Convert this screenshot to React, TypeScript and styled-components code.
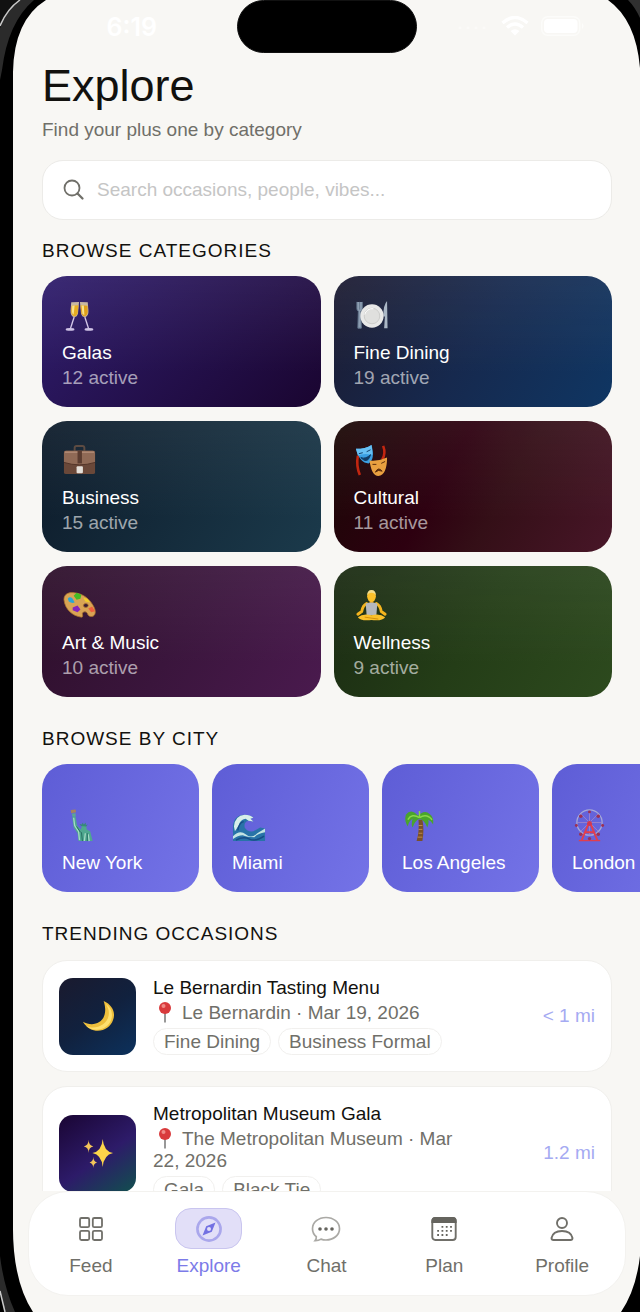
import React from 'react';
import styled, { createGlobalStyle } from 'styled-components';

const GlobalStyle = createGlobalStyle`
  * { box-sizing: border-box; }
  body {
    margin: 0;
    background: #000;
    font-family: "Liberation Sans", Arial, sans-serif;
    font-size: 19px;
    line-height: 22px;
    color: #12110e;
  }
  h1, h2, h3, p { margin: 0; font-weight: 400; }
  button { font: inherit; color: inherit; border: 0; padding: 0; text-align: left; cursor: pointer; }
  a { color: inherit; text-decoration: none; }
`;

const Device = styled.div`
  position: relative;
  height: 100vh;
  padding-left: 13px;
  background: #000;
  overflow: hidden;
`;

const Screen = styled.div`
  height: 100%;
  display: flex;
  flex-direction: column;
  background: #f8f7f4;
`;

const Corner = styled.svg<{ $v: 'top' | 'bottom'; $h: 'left' | 'right' }>`
  position: absolute;
  ${(p) => p.$v}: 0;
  ${(p) => p.$h}: 0;
  pointer-events: none;
`;

const StatusBar = styled.header`
  flex: none;
  height: 60px;
  display: grid;
  grid-template-columns: 1fr 180px 1fr;
  color: #fff;
`;

const Clock = styled.time`
  justify-self: center;
  margin: 12px 0 0 14px;
  font: 600 25px/30px Inter, sans-serif;
`;

const Island = styled.div`
  height: 53px;
  border-radius: 27px;
  background: #000;
  border: 1px solid #111;
`;

const Signals = styled.div`
  display: flex;
  align-items: center;
  height: 52px;
  padding-left: 40px;
  gap: 12px;
`;

const Scroll = styled.main`
  flex: 1;
  min-height: 0;
  overflow: hidden;
  display: flex;
  flex-direction: column;
`;

const Intro = styled.div`
  flex: none;
  padding: 0 28px 0 29px;
`;

const Title = styled.h1`
  font-size: 45px;
  line-height: 52px;
`;

const Subtitle = styled.p`
  margin-top: 7px;
  color: #706f69;
`;

const SearchBox = styled.label`
  display: flex;
  align-items: center;
  gap: 12px;
  height: 60px;
  margin-top: 19px;
  padding: 0 20px;
  background: #fff;
  border: 1px solid #ecebe8;
  border-radius: 21px;
`;

const SearchInput = styled.input`
  flex: 1;
  min-width: 0;
  border: 0;
  padding: 0;
  outline: 0;
  background: none;
  font: inherit;
  color: #12110e;
  &::placeholder { color: #c5c5c5; opacity: 1; }
`;

const Section = styled.section<{ $first?: boolean }>`
  flex: none;
  margin-top: ${(p) => (p.$first ? 20 : 31)}px;
`;

const Heading = styled.h2`
  padding: 0 28px 0 29px;
  margin-bottom: 14px;
  font-size: 19px;
  line-height: 22px;
  letter-spacing: 1px;
`;

const CategoryGrid = styled.div`
  display: grid;
  grid-template-columns: 1fr 1fr;
  gap: 14px 13px;
  padding: 0 28px 0 29px;
`;

const Tile = styled.button<{ $fill: string }>`
  display: flex;
  flex-direction: column;
  justify-content: flex-end;
  border-radius: 25px;
  padding: 18px 20px;
  color: #fff;
  background: ${(p) => p.$fill};
`;

const CategoryTile = styled(Tile)`
  height: 131px;
`;

const CityTile = styled(Tile)`
  flex: none;
  width: 157px;
  height: 128px;
`;

const Glyph = styled.svg`
  display: block;
  width: 35px;
  height: 36px;
  margin-bottom: 9px;
`;

const Count = styled.span`
  margin-top: 3px;
  color: rgba(255, 255, 255, 0.6);
`;

const CityRow = styled.div`
  display: flex;
  gap: 13px;
  padding: 0 28px 0 29px;
  overflow: hidden;
`;

const Occasions = styled.div`
  display: flex;
  flex-direction: column;
  gap: 14px;
  padding: 1px 28px 0 29px;
`;

const OccasionCard = styled.article`
  display: flex;
  align-items: center;
  gap: 17px;
  padding: 16px;
  background: #fff;
  border: 1px solid #f0efec;
  border-radius: 25px;
`;

const Thumb = styled.div<{ $fill: string }>`
  flex: none;
  width: 77px;
  height: 77px;
  border-radius: 14px;
  display: grid;
  place-items: center;
  background: ${(p) => p.$fill};
`;

const Details = styled.div`
  flex: 1;
  min-width: 0;
  display: flex;
  flex-direction: column;
  gap: 4px;
`;

const Name = styled.h3`
  font-size: 19px;
  line-height: 21px;
`;

const Meta = styled.p`
  max-width: 320px;
  color: #706f69;
`;

const Pin = styled.svg`
  width: 24px;
  height: 22px;
  margin-right: 5px;
  vertical-align: top;
`;

const Tags = styled.div`
  display: flex;
  gap: 7px;
`;

const Tag = styled.span`
  height: 27px;
  padding: 0 10px;
  border: 1px solid #f1f0ee;
  border-radius: 14px;
  line-height: 25px;
  white-space: nowrap;
  color: #706f69;
`;

const Distance = styled.span`
  white-space: nowrap;
  color: #a5aaf2;
`;

const TabBar = styled.nav`
  flex: none;
  display: flex;
  height: 105px;
  margin: 0 14px 16px 15px;
  padding: 16px 4px 0 3px;
  background: #fff;
  border: 1px solid #f3f2ef;
  border-radius: 40px;
`;

const Tab = styled.a<{ $active?: boolean }>`
  flex: 1;
  display: flex;
  flex-direction: column;
  align-items: center;
  gap: 6px;
  color: ${(p) => (p.$active ? '#7c7be8' : '#706f69')};
`;

const TabIcon = styled.span<{ $active?: boolean }>`
  width: 67px;
  height: 41px;
  display: grid;
  place-items: center;
  border-radius: 16px;
  border: 1px solid ${(p) => (p.$active ? '#c9c5ef' : 'transparent')};
  background: ${(p) => (p.$active ? '#e2dff8' : 'none')};
`;

const sheen = 'linear-gradient(180deg, rgba(255,255,255,.06), rgba(255,255,255,0) 75%)';

const glyphs: Record<string, React.ReactNode> = {
  galas: (
    <>
      <g>
        <path d="M9.500 5.500 17.500 5 16.500 17Q15 21.500 12 20.500 8.500 19 8.800 14Z" fill="#c9b8a0" />
        <path d="M9.800 9 17 8.500 16 17Q14.500 20.500 12 19.500 9.300 18 9.500 14Z" fill="#e7ad22" />
        <path d="M10.500 9 13 8.800 12 18Q10 17 10.300 13Z" fill="#fbe38a" />
        <path d="M12.500 20.500 8.500 33" stroke="#d6c9ea" strokeWidth="1.400" />
        <ellipse cx="8.300" cy="33.300" rx="4.500" ry="1.500" fill="#cfc3e6" />
      </g>
      <g transform="matrix(-1 0 0 1 36 0)">
        <path d="M9.500 5.500 17.500 5 16.500 17Q15 21.500 12 20.500 8.500 19 8.800 14Z" fill="#c9b8a0" />
        <path d="M9.800 9 17 8.500 16 17Q14.500 20.500 12 19.500 9.300 18 9.500 14Z" fill="#dfa01a" />
        <path d="M13.500 8.800 16 8.600 15 17 13 19Z" fill="#fbe38a" />
        <path d="M12.500 20.500 8.500 33" stroke="#d6c9ea" strokeWidth="1.400" />
        <ellipse cx="8.300" cy="33.300" rx="4.500" ry="1.500" fill="#cfc3e6" />
      </g>
    </>
  ),
  dining: (
    <>
      <path d="M3 5v7q0 2 1.500 2.500L4 32h3.500L7 14.500Q8.500 14 8.500 12V5M5.800 5v8" fill="#8e9fb3" stroke="#65788d" strokeWidth="1" />
      <path d="M34 4q-4 4-3.800 16h1.600L31 32h3.500Z" fill="#aab7c5" />
      <circle cx="18.500" cy="19.500" r="12" fill="#e8e8e7" />
      <circle cx="18.500" cy="19.500" r="8" fill="#e0e0de" stroke="#c6c6c4" strokeWidth=".8" />
      <path d="M11 18a8 8 0 0 1 9-6" fill="none" stroke="#fff" strokeWidth="1" />
    </>
  ),
  business: (
    <>
      <path d="M13 9V6q0-2 2-2h6q2 0 2 2v3" fill="none" stroke="#5d4b42" strokeWidth="2" />
      <rect x="2" y="9" width="32" height="24" rx="2" fill="#6a4839" />
      <path d="M2 11q0-2 2-2h28q2 0 2 2v10q-16 5-32 0Z" fill="#906a56" />
      <path d="M3 10.500h30" stroke="#b08a74" strokeWidth="1.500" />
      <path d="M2 21q16 5 32 0" fill="none" stroke="#543528" />
      <rect x="16" y="9" width="4.500" height="13" fill="#5b3c30" />
      <rect x="15" y="25" width="6.500" height="7" rx="1" fill="#e5e0da" />
    </>
  ),
  cultural: (
    <>
      <path d="M4 14Q2 24 6 34M30 4q3 8-1 14" fill="none" stroke="#c32610" strokeWidth="2.600" />
      <path d="M2 7Q12 7 18 3 22 18 15 22 6 22 2 7Z" fill="#3a9fe3" />
      <path d="M2 7Q12 7 18 3 19 9 19 13 9 11 4 14Z" fill="#67c0f4" />
      <path d="m5 12 4-1m4-1 4-2M7 16q5 2 10-3-2 7-6 6-2-1-4-3Z" stroke="#123c66" fill="#123c66" />
      <path d="M16 19q9 1 18-3 0 18-9 19-7 0-9-16Z" fill="#e8a040" />
      <path d="m19 23 4 0m5-1 4-2M22 31q3-6 7-1-4-2-7 1Z" stroke="#5b2c0b" fill="#5b2c0b" />
    </>
  ),
  art: (
    <>
      <path fillRule="evenodd" d="M2 13C2 7 7 5 13 6c9 1 15 6 19 13 3 5 3 9 0 11-3 1-5 0-6-3-1-2-4-2-5 0 0 2 1 4-1 4C11 30 3 23 2 13Zm20 6a2.500 2 0 1 0 5 0 2.500 2 0 0 0-5 0Z" fill="#d9a455" stroke="#a9712b" strokeWidth=".8" />
      <path d="M6 12q2-3 5 0l2 4q-3 1-6-1Z" fill="#2ba5d4" />
      <path d="m12 9 3-3 5 2-1 4-4 1Z" fill="#44bb25" />
      <path d="m22 11 4 1 3 4-5-1Z" fill="#f1ce2a" />
      <path d="m11 21 5-2 3 4-3 3-5-2Z" fill="#8623bb" />
      <path d="m27 22 4-2 3 5-4 1Z" fill="#ef603d" />
    </>
  ),
  wellness: (
    <>
      <path d="M13 17Q9 19 8 25L4 28M23 17q4 2 5 8l4 3" fill="none" stroke="#f5b51e" strokeWidth="3" strokeLinecap="round" />
      <path d="M16 14h4v4h-4Z" fill="#e19c12" />
      <path d="M12 17q6-2 12 0l-1 12H13Z" fill="#b5b8bd" />
      <path d="M4 31q5-4 14-2 9-2 14 2-2 4-14 3-12 1-14-3Z" fill="#fbc02a" />
      <path d="m11 31 14 2" stroke="#d18e0c" />
      <ellipse cx="18" cy="9.500" rx="4.500" ry="6" fill="#fbc02a" />
      <path d="M13.500 9q0-6 4.500-6t4.500 6q-1-3-4.500-3t-4.500 3Z" fill="#f2dc8c" />
    </>
  ),
  newyork: (
    <>
      <path d="m9 3 5-.500.500 3-5 1Z" fill="#a7835e" />
      <path d="m10 7 4-.500V10h-3Z" fill="#5aa893" />
      <path d="M10.500 10H14l1.500 9 4 4.500q0-4 3-4.500 3 0 3 4l3.500 2 2.500 10H17l-1-8-4-6Z" fill="#4fa88f" />
      <path d="m12 11 1 8 4 6 1 9M24 27l-1 8M27 28l1 7" fill="none" stroke="#a5dac5" strokeWidth="1.300" />
      <path d="m20 26 1 9M26 27v8M15 20l4 6" fill="none" stroke="#256b60" />
      <path d="m19.500 19.500-1.500-2 2.500.500.500-2 1.500 2 2-2v2.500l2-.500-1.500 2Z" fill="#368b78" />
    </>
  ),
  miami: (
    <>
      <path d="M1 35V20Q2 8 13 8q6 0 9 3l-3 1 3 3-5-1q-5 1-4 7 3 5 9 4l7-4 5 1v13Z" fill="#2873a8" />
      <path d="M2 20Q3 9 13 8q6 0 9 3l-3 1 3 3-5-1-3-2q-6 1-7 7l-4 6Z" fill="#d7eee9" />
      <path d="M1 30q7-7 13-2t12-1l8-5v4q-7 1-11 5-8 0-12-2-5 0-10 4Z" fill="#c3e4e3" />
      <path d="M6 24q1-8 6-9M4 34q8-4 14-1t15-3" fill="none" stroke="#174c86" strokeWidth="1.500" />
    </>
  ),
  la: (
    <>
      <path d="m17 13 4 0q2 10 0 22h-6q3-10 2-22Z" fill="#7a5029" />
      <path d="m17 19 4 0m-4 4h4m-4 4h4m-5 4h5" stroke="#c18b49" />
      <path d="M18 11Q10 0 4 8 2 14 6 20q1-6 5-8-2 6 0 9 2-7 7-9 5 1 8 9 2-5 1-8 3 1 5 5 1-8-4-11-5-5-14 4Z" fill="#49a52c" />
      <path d="M18 11q-8-5-12 2m12-2q7-5 13 2M18 11l0-7" fill="none" stroke="#8bd64b" strokeWidth="1.500" />
    </>
  ),
  london: (
    <>
      <circle cx="18" cy="16" r="13" fill="none" stroke="#a7a9d7" strokeWidth="1.300" />
      <path d="M18 3v26M5 16h26M9 7l18 18M27 7 9 25" stroke="#a889c9" strokeWidth=".8" />
      <path d="M17 17 10 34m9-17 7 17M13 26h10" stroke="#e23e4c" strokeWidth="2" />
      <path d="M7 34.500h22" stroke="#e23e4c" strokeWidth="1.400" />
      <circle cx="18" cy="17" r="2.500" fill="#d0384e" />
      <g fill="#9c3155">
        <circle cx="18" cy="5" r="1.500" /><circle cx="18" cy="32.500" r="1.700" /><circle cx="4.500" cy="19" r="1.500" /><circle cx="31.500" cy="19" r="1.500" />
        <circle cx="9" cy="9.500" r="1.800" /><circle cx="27" cy="9.500" r="1.800" /><circle cx="9" cy="28" r="1.800" /><circle cx="27" cy="28" r="1.800" />
      </g>
    </>
  ),
};

const categories = [
  { name: 'Galas', count: 12, art: 'galas', fill: 'linear-gradient(135deg, #2f1d6d, #1a0530)' },
  { name: 'Fine Dining', count: 19, art: 'dining', fill: 'linear-gradient(120deg, #1c1b31, #16294e 50%, #0f3663)' },
  { name: 'Business', count: 15, art: 'business', fill: 'linear-gradient(120deg, #0d1b2a, #1b3a4b)' },
  { name: 'Cultural', count: 11, art: 'cultural', fill: 'linear-gradient(120deg, #1a0805, #2d0010 40%, #340f17 60%, #481628)' },
  { name: 'Art & Music', count: 10, art: 'art', fill: 'linear-gradient(120deg, #2d0f2a, #3a153c 50%, #4a1a4e)' },
  { name: 'Wellness', count: 9, art: 'wellness', fill: 'linear-gradient(120deg, #1a2a12, #243d17 50%, #2d4a1e)' },
];

const cities = [
  { name: 'New York', art: 'newyork' },
  { name: 'Miami', art: 'miami' },
  { name: 'Los Angeles', art: 'la' },
  { name: 'London', art: 'london' },
];

const moon = (
  <svg width="34" height="34" viewBox="0 0 36 36" aria-hidden="true">
    <path d="M24 2C33 6 37 14 34 22 30 35 11 39 2 24 14 31 31 24 24 2Z" fill="#eebf3c" />
    <path d="M26 5c6 8 4 17-3 22-6 4-13 4-18 1 9 8 23 5 27-6 2-7 0-13-6-17Z" fill="#ffe06e" />
  </svg>
);

const sparkles = (
  <svg width="32" height="34" viewBox="0 0 34 36" aria-hidden="true">
    <path d="M22 3q1 13 11 15-10 2-11 15-1-13-11-15 10-2 11-15Z" fill="#fdd54a" />
    <path d="M7 4q0 6 5 7-5 1-5 7 0-6-5-7 5-1 5-7ZM12 22q0 5 4 6-4 1-4 6 0-5-4-6 4-1 4-6Z" fill="#f4c55a" />
  </svg>
);

const occasions = [
  {
    name: 'Le Bernardin Tasting Menu',
    meta: 'Le Bernardin · Mar 19, 2026',
    tags: ['Fine Dining', 'Business Formal'],
    distance: '< 1 mi',
    fill: 'linear-gradient(145deg, #1a1a2e, #11213e 50%, #0c315c)',
    art: moon,
  },
  {
    name: 'Metropolitan Museum Gala',
    meta: 'The Metropolitan Museum · Mar 22, 2026',
    tags: ['Gala', 'Black Tie'],
    distance: '1.2 mi',
    fill: 'linear-gradient(145deg, #1a0533, #2d1b69 55%, #11504e)',
    art: sparkles,
  },
];

const tabs = [
  {
    name: 'Feed',
    icon: (
      <g fill="none" stroke="#706f69" strokeWidth="1.800">
        <rect x="2" y="2" width="9.200" height="9.200" rx="1.500" />
        <rect x="14.800" y="2" width="9.200" height="9.200" rx="1.500" />
        <rect x="2" y="14.800" width="9.200" height="9.200" rx="1.500" />
        <rect x="14.800" y="14.800" width="9.200" height="9.200" rx="1.500" />
      </g>
    ),
  },
  {
    name: 'Explore',
    active: true,
    icon: (
      <>
        <circle cx="13" cy="13" r="11.600" fill="none" stroke="#aaa7ec" strokeWidth="2.600" />
        <path fillRule="evenodd" d="M19.500 6.500 15.800 15.800 6.500 19.500 10.200 10.200ZM13 11a2 2 0 1 0 0 4 2 2 0 0 0 0-4Z" fill="#7371e2" />
      </>
    ),
  },
  {
    name: 'Chat',
    icon: (
      <>
        <path d="M13 1.500c7.500 0 13.500 4.800 13.500 11.200S20.500 24 13 24c-2 0-3.500-.3-5-.9-1.500 1-3.500 1.700-6 1.600 1-1.200 1.500-2.500 1.300-4C.8 18.600-.5 15.800-.5 12.700-.5 6.300 5.500 1.500 13 1.500Z" fill="none" stroke="#aaa9a5" strokeWidth="1.700" />
        <g fill="#65645e"><circle cx="7" cy="13" r="1.800" /><circle cx="13" cy="13" r="1.800" /><circle cx="19" cy="13" r="1.800" /></g>
      </>
    ),
  },
  {
    name: 'Plan',
    icon: (
      <>
        <rect x="1.300" y="2" width="23.400" height="22" rx="3" fill="none" stroke="#706f69" strokeWidth="1.900" />
        <path d="M.4 7V5q0-4 4-4h17.200q4 0 4 4v2Z" fill="#65645e" />
        <path d="M10.500 10.800h11.500M6.200 14.900H22M6.200 19H18" stroke="#65645e" strokeWidth="1.800" strokeDasharray="1.800 2.500" />
      </>
    ),
  },
  {
    name: 'Profile',
    icon: (
      <g fill="none" stroke="#706f69" strokeWidth="1.900">
        <circle cx="13" cy="7" r="5" />
        <path d="M4.500 24h17q2 0 2-2Q22 15 13 15T2.500 22q0 2 2 2Z" />
      </g>
    ),
  },
];

export default function App() {
  return (
    <Device>
      <GlobalStyle />
      <Screen>
        <StatusBar>
          <Clock>6:19</Clock>
          <Island />
          <Signals>
            <svg width="32" height="6" viewBox="0 0 32 6" aria-hidden="true">
              <g fill="#fbfaf8"><circle cx="3" cy="5" r="1.500" /><circle cx="11" cy="5" r="1.500" /><circle cx="19" cy="5" r="1.500" /><circle cx="27" cy="5" r="1.500" /></g>
            </svg>
            <svg width="28" height="20" viewBox="0 0 28 20" aria-hidden="true">
              <path d="M1.500 7Q14-4 26.500 7M6 11.500q8-7 16 0" fill="none" stroke="#fff" strokeWidth="3.400" />
              <path d="m9.500 15 4.500 4.500 4.500-4.500q-4.500-3.500-9 0Z" fill="#fff" />
            </svg>
            <svg width="44" height="20" viewBox="0 0 44 20" aria-hidden="true">
              <rect x=".7" y=".7" width="38" height="18.500" rx="6" fill="none" stroke="#fcfcfa" strokeWidth="1.400" />
              <rect x="3" y="3" width="33.500" height="14" rx="4" fill="#fff" />
              <path d="M41 7q3 3 0 6Z" fill="#fcfcfa" />
            </svg>
          </Signals>
        </StatusBar>

        <Scroll>
          <Intro>
            <Title>Explore</Title>
            <Subtitle>Find your plus one by category</Subtitle>
            <SearchBox>
              <svg width="22" height="22" viewBox="0 0 22 22" fill="none" stroke="#706f69" strokeWidth="1.800" strokeLinecap="round" aria-hidden="true">
                <circle cx="9" cy="9" r="7.500" />
                <path d="m14.500 14.500 5 5" strokeWidth="2.300" />
              </svg>
              <SearchInput type="text" aria-label="Search" placeholder="Search occasions, people, vibes..." />
            </SearchBox>
          </Intro>

          <Section $first>
            <Heading>BROWSE CATEGORIES</Heading>
            <CategoryGrid>
              {categories.map((c) => (
                <CategoryTile key={c.name} $fill={`${sheen}, ${c.fill}`}>
                  <Glyph viewBox="0 0 36 37" fill="none" aria-hidden="true">{glyphs[c.art]}</Glyph>
                  <span>{c.name}</span>
                  <Count>{c.count} active</Count>
                </CategoryTile>
              ))}
            </CategoryGrid>
          </Section>

          <Section>
            <Heading>BROWSE BY CITY</Heading>
            <CityRow>
              {cities.map((c) => (
                <CityTile key={c.name} $fill="linear-gradient(115deg, #5e5dd6, #7473e7)">
                  <Glyph viewBox="0 0 36 37" fill="none" aria-hidden="true">{glyphs[c.art]}</Glyph>
                  <span>{c.name}</span>
                </CityTile>
              ))}
            </CityRow>
          </Section>

          <Section>
            <Heading>TRENDING OCCASIONS</Heading>
            <Occasions>
              {occasions.map((o) => (
                <OccasionCard key={o.name}>
                  <Thumb $fill={o.fill}>{o.art}</Thumb>
                  <Details>
                    <Name>{o.name}</Name>
                    <Meta>
                      <Pin viewBox="0 0 24 22" aria-hidden="true">
                        <path d="M12 9v11.500" stroke="#8d8d8d" strokeWidth="1.800" />
                        <circle cx="12" cy="6" r="6" fill="#d93a3c" />
                        <circle cx="10.500" cy="4" r="2" fill="#f08a86" />
                      </Pin>
                      {o.meta}
                    </Meta>
                    <Tags>
                      {o.tags.map((t) => <Tag key={t}>{t}</Tag>)}
                    </Tags>
                  </Details>
                  <Distance>{o.distance}</Distance>
                </OccasionCard>
              ))}
            </Occasions>
          </Section>
        </Scroll>

        <TabBar>
          {tabs.map((t) => (
            <Tab key={t.name} href={`#${t.name.toLowerCase()}`} $active={t.active}>
              <TabIcon $active={t.active}>
                <svg width="26" height="26" viewBox="0 0 26 26" overflow="visible" aria-hidden="true">{t.icon}</svg>
              </TabIcon>
              {t.name}
            </Tab>
          ))}
        </TabBar>
      </Screen>

      <Corner $v="top" $h="left" width="50" height="80" viewBox="0 0 50 80" aria-hidden="true">
        <path d="M0 0H46Q14 20 13 72V80H0Z" fill="#000" />
        <path d="M20 0H34Q8 22 2 70L0 80V28Q6 10 20 0Z" fill="#2b2b2b" />
        <path d="M0 0H20Q7 10 0 28Z" fill="#111" />
        <path d="M20 0Q7 9 0 26" fill="none" stroke="#c9c9c9" strokeWidth="1.500" />
      </Corner>
      <Corner $v="top" $h="right" width="32" height="68" viewBox="0 0 32 68" aria-hidden="true">
        <path d="M0 0H32V68Q28 20 0 0Z" fill="#000" />
        <path d="M20 0H32V18Q27 7 20 0Z" fill="#303030" />
      </Corner>
      <Corner $v="bottom" $h="left" width="34" height="90" viewBox="0 0 34 90" aria-hidden="true">
        <path d="M0 0H13Q12 58 33 90H0Z" fill="#000" />
        <path d="M0 34Q4 66 15 90H5L0 72Z" fill="#2b2b2b" />
        <path d="M0 69 5 90" stroke="#c9c9c9" strokeWidth="1.500" />
      </Corner>
      <Corner $v="bottom" $h="right" width="20" height="56" viewBox="0 0 20 56" aria-hidden="true">
        <path d="M20 0Q16 34 1 56H20Z" fill="#000" />
      </Corner>
    </Device>
  );
}
